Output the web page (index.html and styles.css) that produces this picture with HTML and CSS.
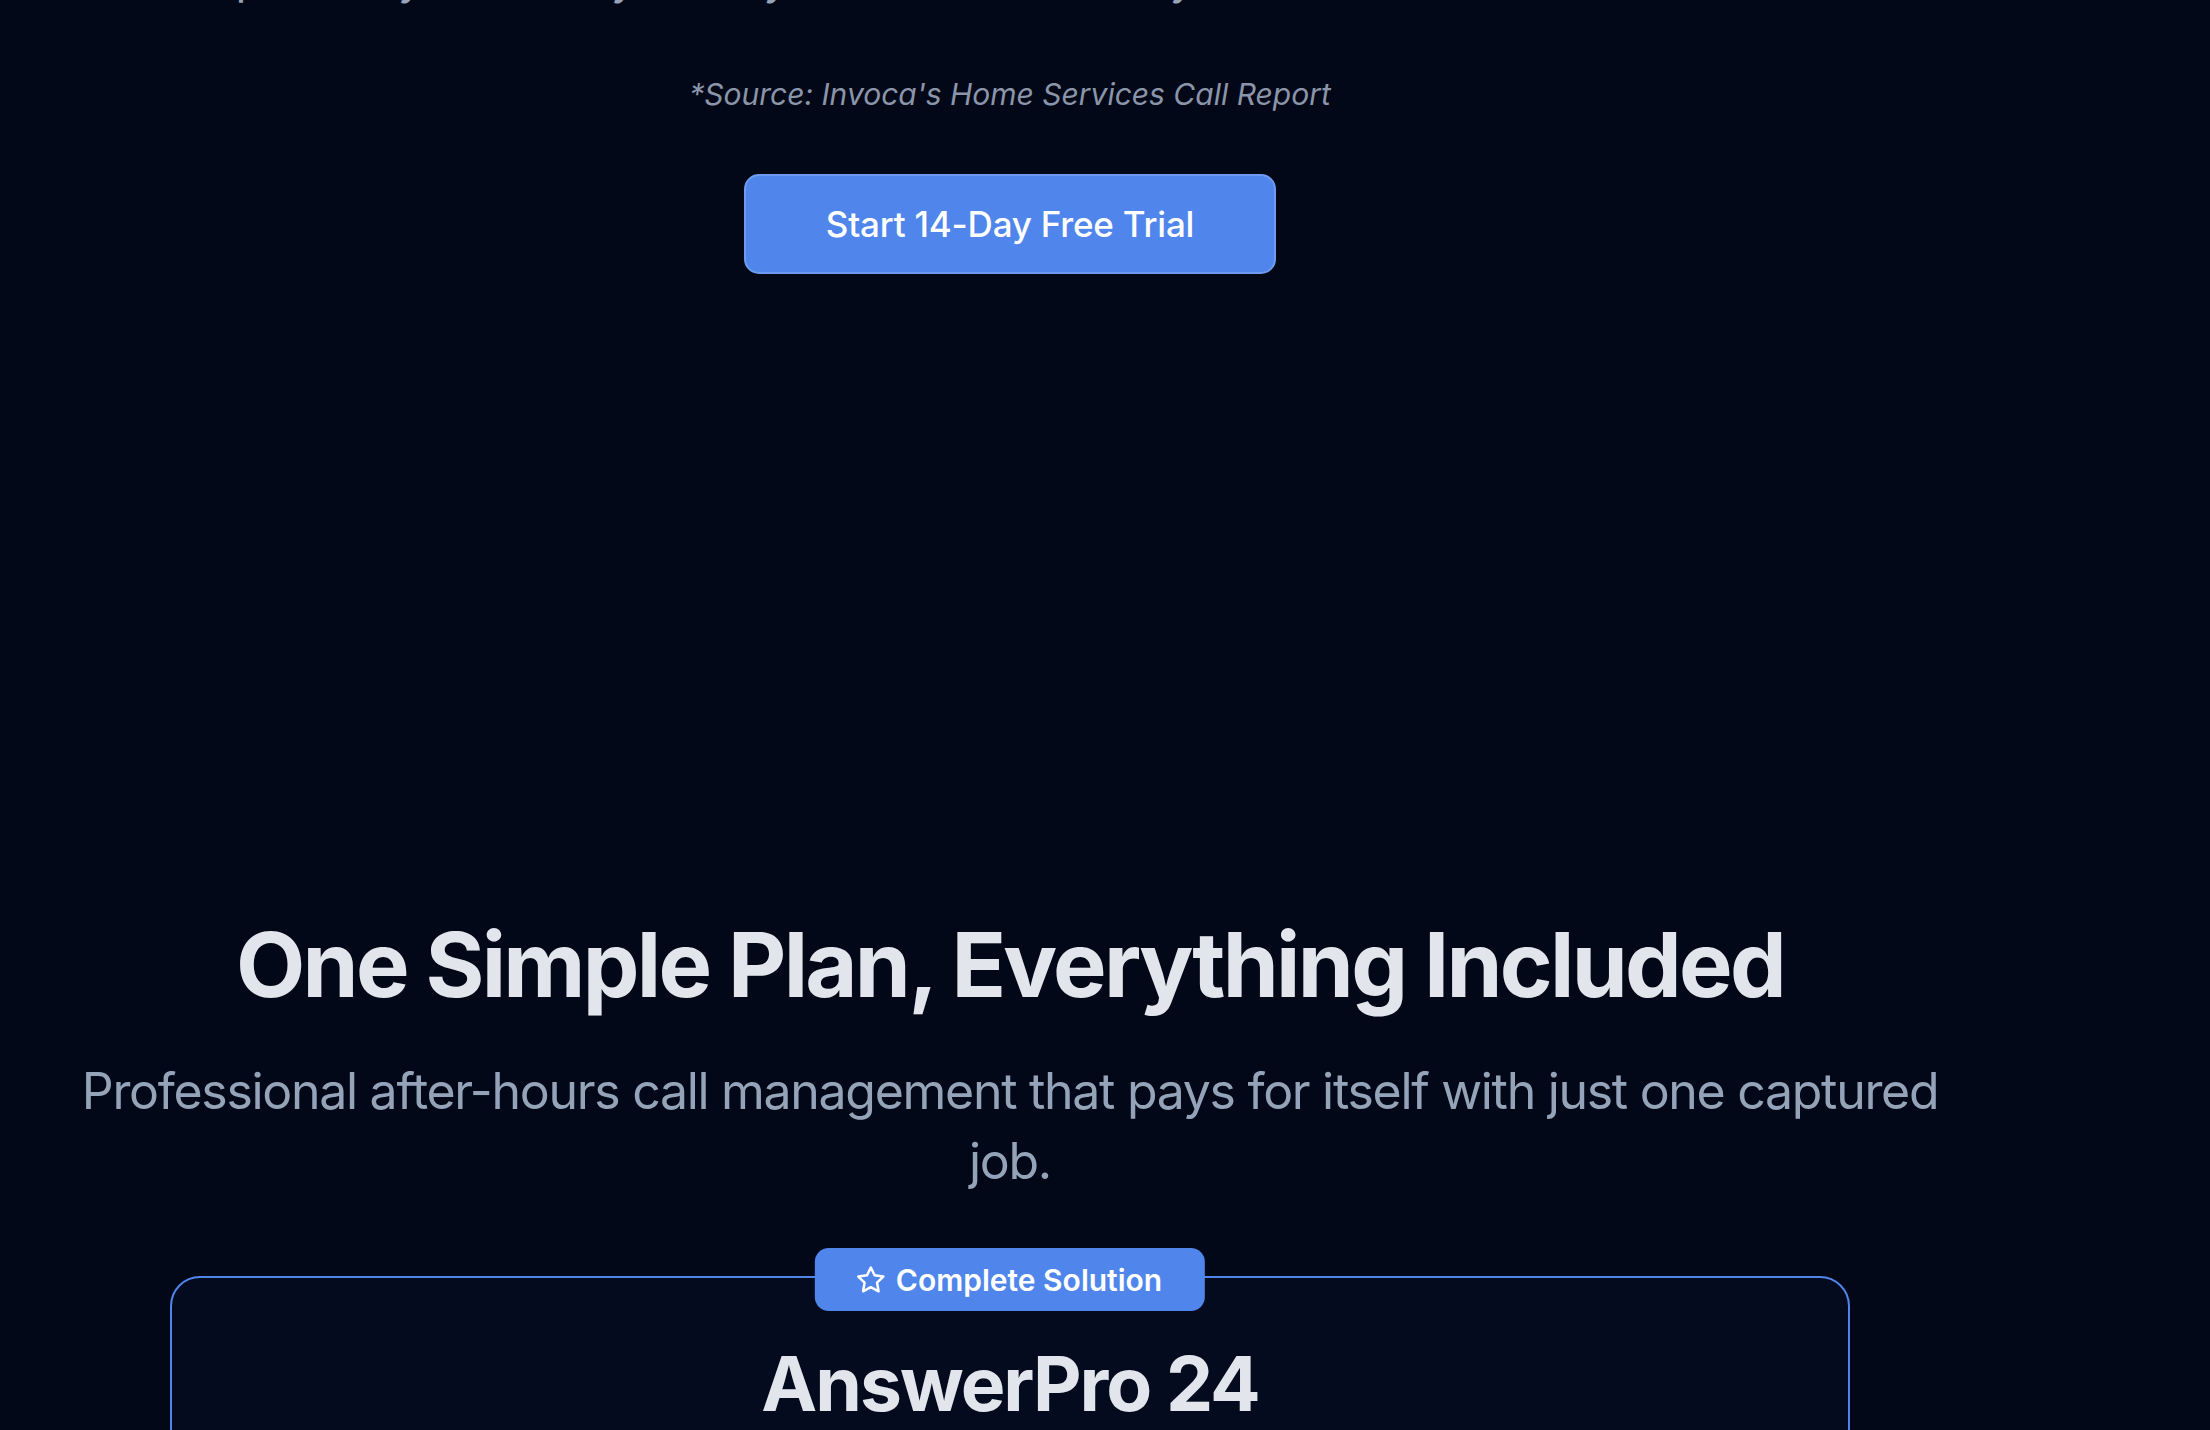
FILE: index.html
```html
<!DOCTYPE html>
<html lang="en">
<head>
<meta charset="utf-8">
<title>AnswerPro 24 — Pricing</title>
<link rel="stylesheet" href="styles.css">
</head>
<body>
<main class="page">
  <section class="stat-tail">
    <p class="stat-text">probably not. They will try the other firm they trust to answer at all hours.</p>
    <p class="source">*Source: Invoca's Home Services Call Report</p>
    <a class="cta" href="#trial">Start 14-Day Free Trial</a>
  </section>

  <section class="pricing">
    <h2 class="pricing-title">One Simple Plan, Everything Included</h2>
    <p class="pricing-sub">Professional after-hours call management that pays for itself with just one captured job.</p>

    <div class="plan-card">
      <span class="plan-badge">
        <svg class="star" viewBox="0 0 24 24" fill="none" stroke="currentColor" stroke-width="2" stroke-linecap="round" stroke-linejoin="round"><polygon points="12 2 15.09 8.26 22 9.27 17 14.14 18.18 21.02 12 17.77 5.82 21.02 7 14.14 2 9.27 8.91 8.26 12 2"/></svg>
        Complete Solution
      </span>
      <div class="plan-header">
        <h3 class="plan-name">AnswerPro 24</h3>
      </div>
    </div>
  </section>
</main>
</body>
</html>
```

FILE: styles.css
```css
* {
  box-sizing: border-box;
  margin: 0;
  padding: 0;
}

html,
body {
  background: #020817;
}

body {
  font-family: Inter, "Noto Sans", sans-serif;
  color: #e2e8f0;
  overflow: hidden;
}

.page {
  width: 2020px;
  display: flex;
  flex-direction: column;
  align-items: center;
}

.stat-tail {
  display: flex;
  flex-direction: column;
  align-items: center;
}

.stat-text {
  margin-top: -57px;
  max-width: 1920px;
  font-size: 45px;
  line-height: 70px;
  color: #94a3b8;
  text-align: center;
}

.source {
  margin-top: 61px;
  font-size: 30px;
  line-height: 40px;
  font-style: italic;
  color: #8b95a9;
}

.cta {
  margin-top: 60px;
  height: 100px;
  padding: 0 80px;
  display: inline-flex;
  align-items: center;
  justify-content: center;
  background: #5086ec;
  border: 2px solid #6e9bf0;
  border-radius: 15px;
  color: #ffffff;
  font-size: 35px;
  font-weight: 500;
  letter-spacing: -0.2px;
  text-decoration: none;
}

.pricing {
  margin-top: 641px;
  display: flex;
  flex-direction: column;
  align-items: center;
}

.pricing-title {
  font-size: 90px;
  line-height: 100px;
  font-weight: 700;
  letter-spacing: -0.03em;
  color: #e2e6ec;
  text-align: center;
}

.pricing-sub {
  margin-top: 41px;
  max-width: 1920px;
  font-size: 50px;
  line-height: 70px;
  letter-spacing: -0.026em;
  color: #94a3b8;
  text-align: center;
}

.plan-card {
  position: relative;
  margin-top: 80px;
  width: 1680px;
  min-height: 600px;
  border: 2px solid #5086ec;
  border-radius: 30px;
  background: #050b1f;
}

.plan-badge {
  position: absolute;
  top: -30px;
  left: 50%;
  transform: translateX(-50%);
  height: 63px;
  padding: 0 43px 0 41px;
  display: flex;
  align-items: center;
  gap: 10px;
  background: #5086ec;
  border-radius: 14px;
  color: #ffffff;
  font-size: 30px;
  font-weight: 600;
  white-space: nowrap;
}

.star {
  width: 30px;
  height: 30px;
  flex: none;
}

.plan-header {
  padding: 61px 60px 0;
}

.plan-name {
  font-size: 75px;
  line-height: 90px;
  font-weight: 700;
  letter-spacing: -0.027em;
  color: #e2e6ec;
  text-align: center;
}
```
